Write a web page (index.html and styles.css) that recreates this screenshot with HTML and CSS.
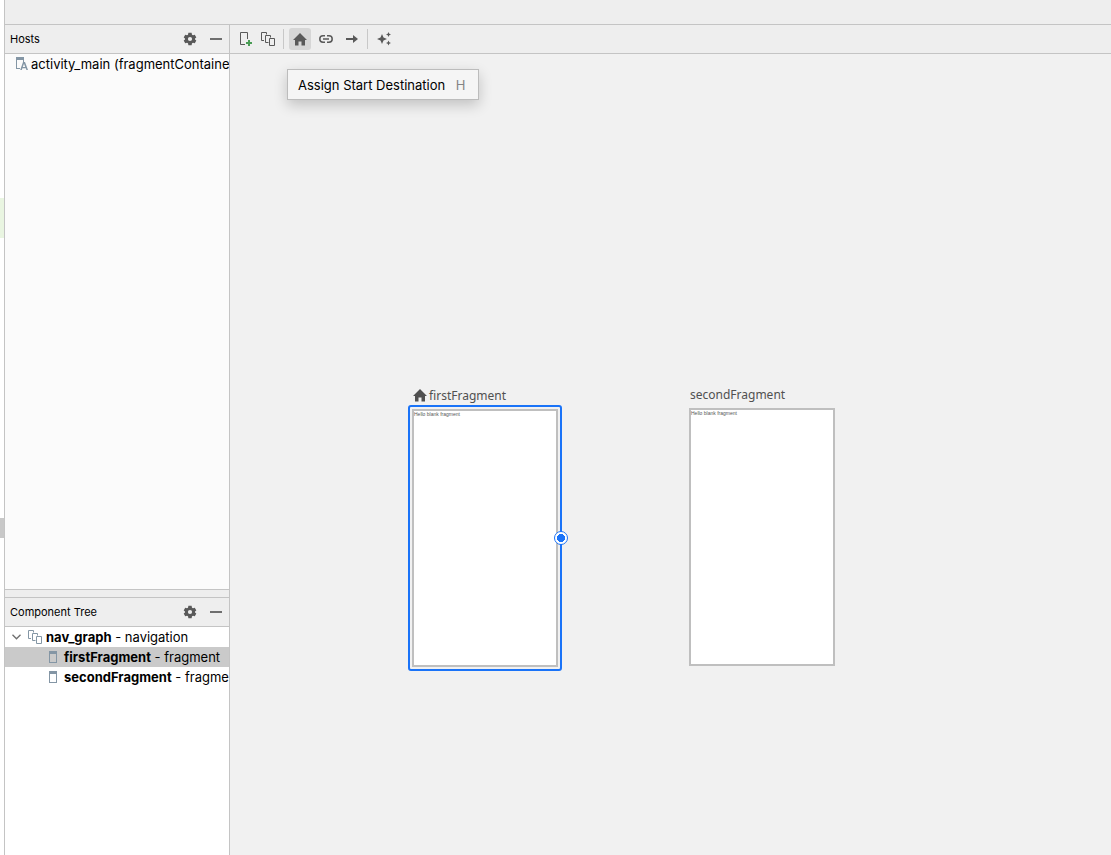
FILE: index.html
```
<!DOCTYPE html>
<html lang="en">
<head>
<meta charset="utf-8">
<title>Navigation Editor</title>
<link rel="stylesheet" href="styles.css">
</head>
<body>
<svg class="defs" aria-hidden="true">
  <symbol id="gear" viewBox="0 0 14 14"><path fill-rule="evenodd" d="M5.400 .8h3.200l.4 1.900 1 .6 1.800-.6 1.500 2.700L12 6.600v.8l1.300 1.200-1.500 2.700-1.800-.6-1 .6-.4 1.900H5.400L5 11.300l-1-.6-1.800.6L.7 8.600 2 7.400v-.8L.7 5.400l1.500-2.700 1.800.6 1-.6zM7 4.900a2.100 2.100 0 1 0 0 4.200 2.100 2.100 0 0 0 0-4.200z"/></symbol>
  <symbol id="home" viewBox="0 0 14 13"><path d="M7 0l7 7h-2v5.500H8.500V8.500h-3v4H2V7H0z"/></symbol>
  <symbol id="graph" viewBox="0 0 14 14"><path fill="none" stroke="currentColor" d="M3 8.500H.5v-8h5v2M4.500 10.500v-7h5v2M4.500 10.500h3M8.500 6.500h5v7h-5z"/></symbol>
  <symbol id="frag" viewBox="0 0 8 12"><path d="M0 0h8v12H0zM1 3v8h6V3z" fill-rule="evenodd"/></symbol>
</svg>
<div class="app">
  <div class="gutter"><span class="mark-green"></span><span class="mark-gray"></span></div>
  <div class="topbar"></div>
  <aside class="side">
    <section class="panel hosts">
      <header class="panel-head">
        <h2>Hosts</h2>
        <button class="tool" aria-label="Hosts settings"><svg width="14" height="14"><use href="#gear"/></svg></button>
        <button class="tool" aria-label="Hide hosts"><span class="minus"></span></button>
      </header>
      <ul class="host-list">
        <li><svg class="blue" width="12" height="14" viewBox="0 0 12 14"><path d="M0 0h8v5H7V3H1v8h3v1H0z"/><path fill-rule="evenodd" d="M7 5h2l3 8h-1.600l-.6-1.800H6.400L5.800 13H4.200zM8 6.700l-1.200 3.300h2.400z"/></svg><span>activity_main (fragmentContainerView)</span></li>
      </ul>
    </section>
    <section class="panel tree">
      <header class="panel-head">
        <h2>Component Tree</h2>
        <button class="tool" aria-label="Tree settings"><svg width="14" height="14"><use href="#gear"/></svg></button>
        <button class="tool" aria-label="Hide tree"><span class="minus"></span></button>
      </header>
      <ul class="tree-list">
        <li class="root"><svg class="chevron" width="9" height="6" viewBox="0 0 9 6"><path fill="none" stroke="currentColor" stroke-width="1.300" d="M.5.8l4 4 4-4"/></svg><svg class="blue" width="14" height="14"><use href="#graph"/></svg><span><b>nav_graph</b> - navigation</span></li>
        <li class="leaf selected"><svg class="blue" width="8" height="12"><use href="#frag"/></svg><span><b>firstFragment</b> - fragment</span></li>
        <li class="leaf"><svg class="blue" width="8" height="12"><use href="#frag"/></svg><span><b>secondFragment</b> - fragment</span></li>
      </ul>
    </section>
  </aside>
  <main class="editor">
    <div class="toolbar" role="toolbar">
      <button class="tool" aria-label="New destination"><svg width="14" height="14" viewBox="0 0 14 14"><path fill="none" stroke="currentColor" d="M6 12.500H1.500v-12h7V7"/><path fill="#499c54" d="M9 8h2v2h2v2h-2v2H9v-2H7v-2h2z"/></svg></button>
      <button class="tool" aria-label="Nested graph"><svg width="14" height="14"><use href="#graph"/></svg></button>
      <span class="sep"></span>
      <button class="tool active" aria-label="Assign Start Destination"><svg width="14" height="13"><use href="#home"/></svg></button>
      <button class="tool" aria-label="Deep link"><svg width="14" height="8" viewBox="0 0 14 8"><path fill="none" stroke="currentColor" stroke-width="1.500" d="M6 .8H4a3.200 3.200 0 0 0 0 6.400h2M8 .8h2a3.200 3.200 0 0 1 0 6.400H8M4 4h6"/></svg></button>
      <button class="tool" aria-label="Action"><svg width="12" height="8" viewBox="0 0 12 8"><path d="M0 3h7V0l5 4-5 4V5H0z"/></svg></button>
      <span class="sep"></span>
      <button class="tool" aria-label="Auto arrange"><svg width="14" height="14" viewBox="0 0 14 14"><path d="M5 2l1.500 3.500L10 7 6.500 8.500 5 12 3.500 8.500 0 7l3.500-1.500zM11.500 0l.8 1.700 1.700.8-1.700.8-.8 1.700-.8-1.700L9 2.500l1.700-.8zM11.500 8.500l.8 1.700 1.700.8-1.700.8-.8 1.700-.8-1.700L9 11l1.700-.8z"/></svg></button>
    </div>
    <div class="canvas">
      <div class="tooltip" role="tooltip">Assign Start Destination <kbd>H</kbd></div>
      <figure class="node first">
        <figcaption><svg width="14" height="13"><use href="#home"/></svg>firstFragment</figcaption>
        <div class="frame"><div class="screen">Hello blank fragment</div><span class="handle"></span></div>
      </figure>
      <figure class="node second">
        <figcaption>secondFragment</figcaption>
        <div class="screen">Hello blank fragment</div>
      </figure>
    </div>
  </main>
</div>
</body>
</html>
```
FILE: styles.css
```
* { box-sizing: border-box; }
body { margin: 0; font: 13px/20px Inter, "Liberation Sans", sans-serif; color: #000; }
h2, ul, figure { margin: 0; padding: 0; }
ul { list-style: none; }
svg { display: block; flex: none; fill: currentColor; }
.defs { position: absolute; width: 0; height: 0; }
.app {
  display: grid;
  grid-template: 25px minmax(0, 1fr) / 5px 225px minmax(0, 1fr);
  height: 100vh;
  background: #f1f1f1;
}
.gutter { grid-row: 1 / 3; position: relative; background: #fff; border-right: 1px solid #c4c4c4; }
.mark-green, .mark-gray { position: absolute; left: 0; width: 4px; }
.mark-green { top: 198px; height: 40px; background: #e9f5e1; }
.mark-gray { top: 518px; height: 20px; background: #c8c8c8; }
.topbar { grid-column: 2 / 4; background: #eee; border-bottom: 1px solid #c4c4c4; }
.side { display: flex; flex-direction: column; min-height: 0; border-right: 1px solid #c4c4c4; background: #eee; }
.panel { display: flex; flex-direction: column; min-height: 0; overflow: hidden; }
.hosts { flex: 565; border-bottom: 1px solid #c4c4c4; margin-bottom: 7px; }
.tree { flex: 258; border-top: 1px solid #c4c4c4; }
.panel-head { display: flex; align-items: center; gap: 4px; flex: none; height: 29px; padding: 0 2px 0 5px; border-bottom: 1px solid #c4c4c4; background: #eee; }
.panel-head h2 { flex: 1; font-size: 11px; font-weight: 400; }
.tool { display: flex; align-items: center; justify-content: center; width: 22px; height: 22px; padding: 0; border: 0; border-radius: 3px; background: none; color: #595959; }
.minus { width: 12px; height: 2px; background: #6e6e6e; }
.host-list, .tree-list { flex: 1; white-space: nowrap; }
.host-list { background: #fbfbfb; }
.tree-list { background: #fff; }
li { display: flex; align-items: center; height: 20px; }
.host-list li { gap: 3px; padding-left: 11px; }
.blue { color: #8496a5; }
.root { gap: 4px; padding-left: 7px; }
.root .chevron { margin-right: 3px; color: #6e6e6e; }
.leaf { gap: 7px; padding-left: 44px; }
.selected { background: #cacaca; }
b { font-weight: 700; }
.editor { display: flex; flex-direction: column; min-width: 0; }
.toolbar { display: flex; align-items: center; gap: 4px; height: 29px; padding-left: 5px; border-bottom: 1px solid #c4c4c4; background: #eee; }
.toolbar .tool:first-child { margin-right: -4px; }
.toolbar .active { background: #d6d6d6; }
.sep { width: 1px; height: 20px; margin-right: 1px; background: #c8c8c8; }
.canvas { position: relative; flex: 1; }
.tooltip { position: absolute; left: 57px; top: 15px; padding: 6px 12px 5px 10px; border: 1px solid #bcbcbc; background: #f5f5f5; box-shadow: 0 5px 14px rgba(0, 0, 0, .2); line-height: 18px; white-space: nowrap; }
kbd { margin-left: 7px; font: inherit; color: #848484; }
.node { position: absolute; }
.first { left: 178px; top: 332px; }
.second { left: 459px; top: 331px; }
figcaption { display: flex; align-items: center; gap: 2px; height: 19px; font: 12px/19px "Noto Sans", "Open Sans", sans-serif; color: #505050; }
.first figcaption { padding-left: 5px; }
.second figcaption { padding-left: 1px; margin-bottom: 4px; }
.frame { position: relative; padding: 2px; border: 2px solid #1a73f8; border-radius: 3px; }
.screen { width: 146px; height: 258px; padding: 1px 0 0; border: 2px solid #bfbfbf; background: #fff; font: 5px/5px "Liberation Sans", sans-serif; color: #555; }
.handle { position: absolute; right: -8px; top: 124px; width: 14px; height: 14px; border: 1px solid #1a73f8; border-radius: 50%; background: radial-gradient(circle, #1a73f8 4px, #fff 4px); }
```
